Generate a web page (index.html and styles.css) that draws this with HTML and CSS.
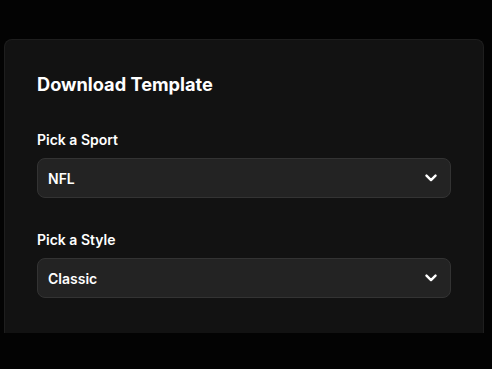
FILE: index.html
```html
<!DOCTYPE html>
<html>
<head>
<meta charset="utf-8">
<link rel="stylesheet" href="styles.css">
</head>
<body>
<div class="page">
  <section class="card">
    <h2 class="title">Download Template</h2>
    <div class="field">
      <label class="label">Pick a Sport</label>
      <div class="select">
        <span class="value">NFL</span>
        <svg class="chev" width="12" height="8" viewBox="0 0 12 8" fill="none" stroke="#fff" stroke-width="2.4" stroke-linecap="round" stroke-linejoin="round"><path d="M1.5 1.6L6 6.1l4.5-4.5"/></svg>
      </div>
    </div>
    <div class="field">
      <label class="label">Pick a Style</label>
      <div class="select">
        <span class="value">Classic</span>
        <svg class="chev" width="12" height="8" viewBox="0 0 12 8" fill="none" stroke="#fff" stroke-width="2.4" stroke-linecap="round" stroke-linejoin="round"><path d="M1.5 1.6L6 6.1l4.5-4.5"/></svg>
      </div>
    </div>
  </section>
</div>
</body>
</html>
```
FILE: styles.css
```css
html, body {
  margin: 0;
  padding: 0;
  background: #030303;
  height: 100%;
}
body {
  font-family: Inter, "Noto Sans", sans-serif;
  color: #fff;
}
.page {
  padding: 39px 8px 0 4px;
  height: 100%;
  box-sizing: border-box;
}
.card {
  width: 480px;
  box-sizing: border-box;
  height: 294px;
  background: #121212;
  border: 1px solid #1e1e1e;
  border-bottom: none;
  border-radius: 8px 8px 0 0;
  padding: 30px 32px 0 32px;
}
.title {
  margin: 0;
  font-size: 18.2px;
  font-weight: 700;
  line-height: 28px;
}
.field {
  margin-top: 32px;
  display: flex;
  flex-direction: column;
  gap: 8px;
}
.field + .field {
  margin-top: 32px;
}
.label {
  font-size: 14px;
  font-weight: 600;
  line-height: 20px;
}
.select {
  height: 40px;
  box-sizing: border-box;
  width: 414px;
  background: #232323;
  border: 1px solid #333;
  border-radius: 8px;
  display: flex;
  align-items: center;
  justify-content: space-between;
  padding: 0 13px 0 10px;
}
.value {
  font-size: 14px;
  font-weight: 600;
}
.chev {
  display: block;
}
```
